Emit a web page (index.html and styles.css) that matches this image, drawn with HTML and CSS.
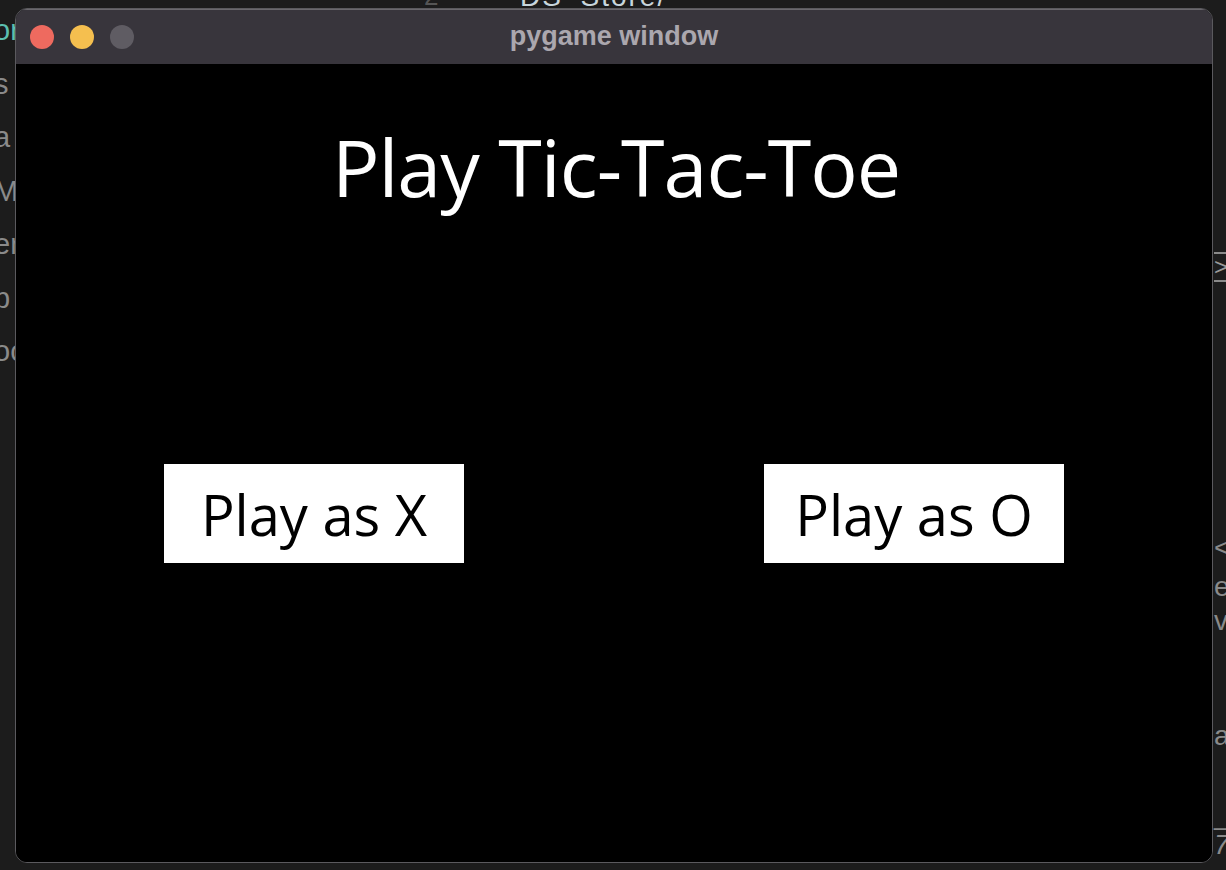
FILE: index.html
```html
<!DOCTYPE html>
<html lang="en">
<head>
<meta charset="utf-8">
<title>pygame window</title>
<link rel="stylesheet" href="styles.css">
</head>
<body>
<div class="desktop">
  <div class="bg-top bg-top-num">2</div>
  <div class="bg-top bg-top-name">DS_Store/</div>
  <div class="bg-left">
    <div class="bg-line teal">or</div>
    <div class="bg-line">s</div>
    <div class="bg-line">a</div>
    <div class="bg-line">MI</div>
    <div class="bg-line">er</div>
    <div class="bg-line">p</div>
    <div class="bg-line">oc</div>
  </div>
  <div class="bg-right">
    <div class="bg-r bg-r-box">&gt;</div>
    <div class="bg-r bg-r-lt">&lt;</div>
    <div class="bg-r bg-r-e">e</div>
    <div class="bg-r bg-r-v">v</div>
    <div class="bg-r bg-r-a">a</div>
    <div class="bg-r bg-r-dash">_</div>
    <div class="bg-r bg-r-7">7</div>
  </div>

  <div class="window">
    <div class="titlebar">
      <div class="lights">
        <span class="light red"></span>
        <span class="light yellow"></span>
        <span class="light gray"></span>
      </div>
      <div class="title">pygame window</div>
    </div>
    <div class="content">
      <h1 class="heading">Play Tic-Tac-Toe</h1>
      <div class="buttons">
        <div class="btn">Play as X</div>
        <div class="btn">Play as O</div>
      </div>
    </div>
  </div>
</div>
</body>
</html>
```

FILE: styles.css
```css
* { box-sizing: border-box; }
html, body {
  margin: 0;
  padding: 0;
  width: 1226px;
  height: 870px;
  overflow: hidden;
  background: #1d1d1f;
}
.desktop {
  position: relative;
  width: 1226px;
  height: 870px;
  background: #1c1c1c;
  font-family: "Liberation Sans", Arial, sans-serif;
}
.bg-top {
  position: absolute;
  top: -19px;
  font-size: 26px;
  color: #7c7c7c;
}
.bg-top-num { left: 424px; color: #555; }
.bg-top-name { left: 520px; color: #c8d6dc; font-size: 28px; letter-spacing: 2px; }
.bg-left {
  position: absolute;
  left: -6px;
  top: 15px;
  display: flex;
  flex-direction: column;
}
.bg-line {
  height: 53.5px;
  font-size: 29px;
  line-height: 30px;
  color: #8a8a8a;
}
.bg-line.teal { color: #5bbfb0; }
.bg-right {
  position: absolute;
  left: 1212px;
  top: 0;
  width: 14px;
  height: 870px;
}
.bg-r {
  position: absolute;
  left: 2px;
  font-size: 28px;
  color: #8a8a8a;
  line-height: 30px;
}
.bg-r-box {
  top: 252px;
  border-top: 2px solid #8a8a8a;
  border-bottom: 2px solid #8a8a8a;
  line-height: 26px;
  height: 30px;
  font-size: 24px;
  color: #9a9a9a;
}
.bg-r-lt { top: 533px; }
.bg-r-e { top: 572px; }
.bg-r-v { top: 606px; }
.bg-r-a { top: 721px; }
.bg-r-dash { top: 800px; }
.bg-r-7 { top: 830px; font-style: italic; }

.window {
  position: absolute;
  left: 15px;
  top: 8px;
  width: 1198px;
  height: 855px;
  border: 1px solid #5b5a5e;
  border-radius: 12px;
  overflow: hidden;
  background: #000;
  display: flex;
  flex-direction: column;
}
.titlebar {
  position: relative;
  height: 55px;
  flex: none;
  background: #38353c;
  border-top: 1px solid #6a686d;
  display: flex;
  align-items: center;
}
.lights {
  display: flex;
  gap: 16px;
  padding-left: 14px;
}
.light {
  width: 24px;
  height: 24px;
  border-radius: 50%;
  display: block;
}
.light.red { background: #ee6a5f; }
.light.yellow { background: #f5bf4f; }
.light.gray { background: #5f5c63; }
.title {
  position: absolute;
  left: 0;
  right: 0;
  top: 0;
  bottom: 0;
  display: flex;
  align-items: center;
  justify-content: center;
  font-family: "Liberation Sans", Arial, sans-serif;
  font-weight: bold;
  font-size: 27px;
  color: #aba7ae;
  padding-bottom: 1px;
  pointer-events: none;
}
.content {
  flex: 1;
  background: #000;
  display: flex;
  flex-direction: column;
  font-family: "Open Sans", "Noto Sans", sans-serif;
}
.heading {
  margin: 53px 0 0 0;
  font-weight: normal;
  font-size: 79px;
  letter-spacing: -1px;
  line-height: 100px;
  height: 100px;
  text-align: center;
  color: #fff;
  padding-left: 4px;
}
.buttons {
  margin-top: 247px;
  display: flex;
  justify-content: space-between;
  padding: 0 148px;
}
.btn {
  width: 300px;
  height: 99px;
  background: #fff;
  color: #000;
  font-size: 56px;
  display: flex;
  align-items: center;
  justify-content: center;
}
```
